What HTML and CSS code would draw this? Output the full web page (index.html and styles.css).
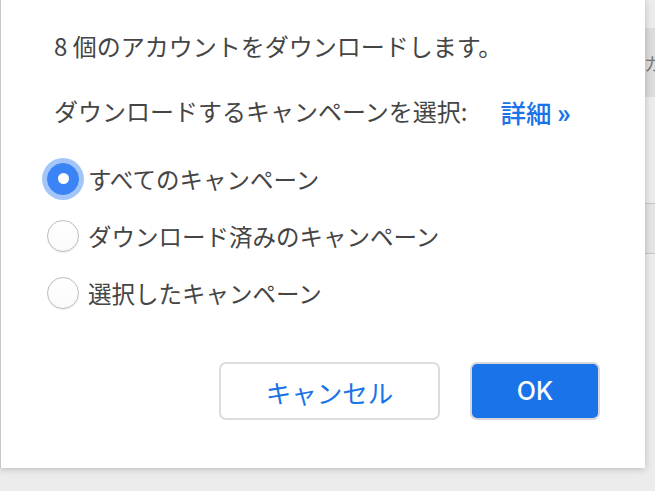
FILE: index.html
```html
<!DOCTYPE html>
<html lang="ja">
<head>
<meta charset="utf-8">
<title>ダウンロード</title>
<link rel="stylesheet" href="styles.css">
</head>
<body>
<div class="backdrop">
  <div class="band"><span class="band-text">カ</span></div>
  <div class="stripe"></div>
</div>
<div class="dialog" role="dialog">
  <p class="lead">8 個のアカウントをダウンロードします。</p>
  <div class="pick">
    <span>ダウンロードするキャンペーンを選択:</span>
    <a class="more" href="#">詳細 <span class="raquo">»</span></a>
  </div>
  <div class="options">
    <label class="option"><span class="radio checked"></span><span class="label">すべてのキャンペーン</span></label>
    <label class="option"><span class="radio"></span><span class="label">ダウンロード済みのキャンペーン</span></label>
    <label class="option"><span class="radio"></span><span class="label">選択したキャンペーン</span></label>
  </div>
  <div class="actions">
    <button class="btn cancel" type="button">キャンセル</button>
    <button class="btn ok" type="button">OK</button>
  </div>
</div>
</body>
</html>
```
FILE: styles.css
```css
html, body {
  margin: 0;
  padding: 0;
}
body {
  width: 655px;
  height: 491px;
  overflow: hidden;
  background: #ececec;
  font-family: "Noto Sans CJK JP", "Noto Sans", sans-serif;
  position: relative;
}
.backdrop {
  padding-top: 28px;
}
.band {
  height: 69px;
  background: #dcdcdc;
  display: flex;
  align-items: center;
  padding-left: 644px;
  overflow: hidden;
  white-space: nowrap;
  box-sizing: border-box;
}
.band-text {
  font-size: 18px;
  color: #777;
}
.stripe {
  margin-top: 106px;
  height: 49px;
  background: #e4e4e4;
  border-top: 1px solid #c6c6c6;
  border-bottom: 1px solid #c6c6c6;
}
.dialog {
  position: absolute;
  left: 0;
  top: 0;
  width: 645px;
  height: 468px;
  box-sizing: border-box;
  background: #fff;
  border-left: 1px solid #c8c8c8;
  box-shadow: 0 1px 7px rgba(0, 0, 0, 0.22);
  padding: 29px 45px 0 53px;
  color: #454545;
  font-size: 24px;
  line-height: 34px;
}
.lead {
  margin: 0;
}
.pick {
  margin-top: 30px;
  display: flex;
  align-items: baseline;
}
.more {
  margin-left: 33px;
  color: #1a73e8;
  text-decoration: none;
  font-weight: 500;
  font-size: 25.5px;
  position: relative;
  top: 2px;
}
.raquo {
  font-family: "Roboto", sans-serif;
  font-weight: 700;
  font-size: 27px;
}
.options {
  margin-top: 21px;
  margin-left: -7px;
  font-size: 23.5px;
}
.option {
  height: 57px;
  display: flex;
  align-items: center;
  gap: 9px;
}
.radio {
  width: 32px;
  height: 32px;
  box-sizing: border-box;
  border-radius: 50%;
  border: 1px solid #bdbdbd;
  background: linear-gradient(#fff, #fafafa);
  box-shadow: 0 1px 1px rgba(0, 0, 0, 0.08);
  display: flex;
  align-items: center;
  justify-content: center;
  flex: none;
}
.radio.checked {
  border-color: #3b84f6;
  background: #3b84f6;
  box-shadow: 0 0 0 5px #a3c6fa;
}
.radio.checked::after {
  content: "";
  width: 11px;
  height: 11px;
  border-radius: 50%;
  background: #fff;
}
.actions {
  margin-top: 41px;
  display: flex;
  justify-content: flex-end;
  gap: 30px;
}
.btn {
  height: 58px;
  box-sizing: border-box;
  border-radius: 7px;
  cursor: pointer;
}
.cancel {
  width: 221px;
  background: #fff;
  border: 2px solid #dadce0;
  color: #1a73e8;
  font-family: "Noto Sans CJK JP", sans-serif;
  font-size: 25.5px;
  font-weight: 400;
}
.ok {
  width: 130px;
  background: #1a73e8;
  border: 2px solid #d6d8dc;
  color: #fff;
  font-family: "Inter", "Roboto", sans-serif;
  font-size: 25px;
  font-weight: 500;
}
```
